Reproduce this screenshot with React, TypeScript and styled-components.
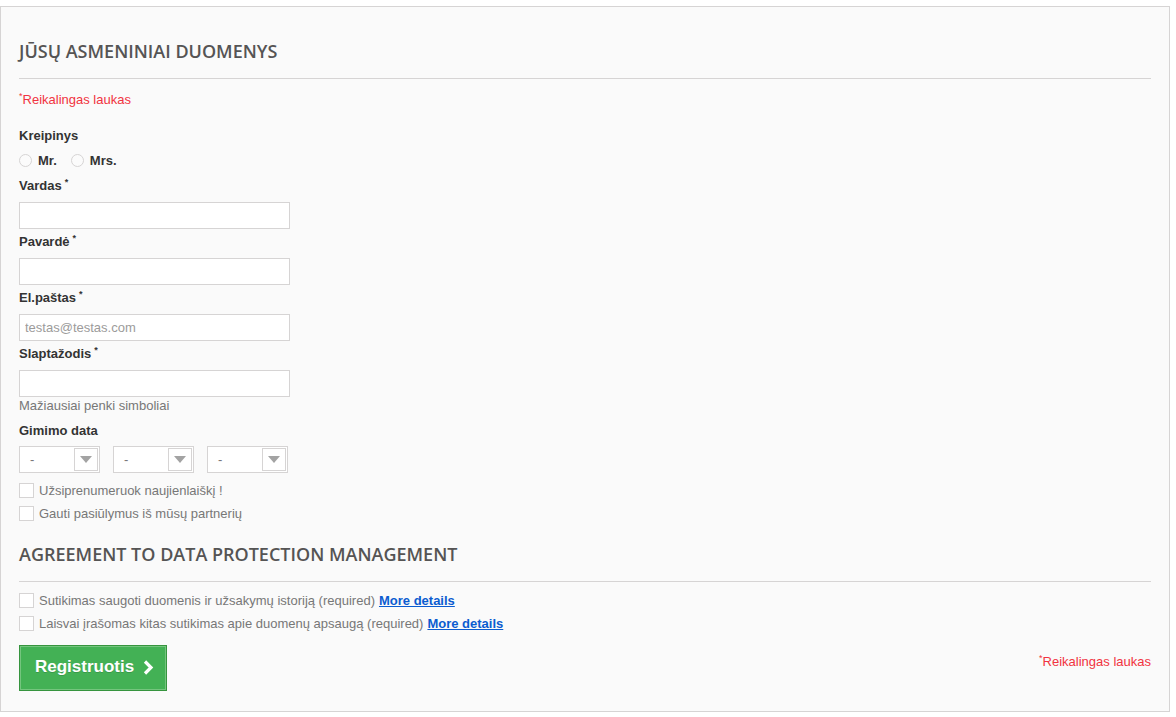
import React from "react";
import styled, { createGlobalStyle } from "styled-components";

const GlobalStyle = createGlobalStyle`
  html, body {
    margin: 0;
    padding: 0;
    background: #ffffff;
  }
  body {
    font-family: "Liberation Sans", Arial, sans-serif;
    font-size: 13px;
    color: #333333;
  }
  * { box-sizing: border-box; }
`;

const Page = styled.div`
  padding-top: 6px;
  width: 1170px;
`;

const Panel = styled.form`
  background: #fafafa;
  border: 1px solid #d6d4d4;
  padding: 32px 18px 20px 18px;
  display: flex;
  flex-direction: column;
`;

const Heading = styled.h3<{ $top?: number }>`
  margin: ${(p) => p.$top ?? 0}px 0 0 0;
  padding: 0 0 15px 0;
  border-bottom: 1px solid #d6d4d4;
  font-family: "Open Sans", sans-serif;
  font-weight: 600;
  font-size: 18px;
  line-height: 24px;
  color: #555454;
  text-transform: uppercase;
`;

const Required = styled.p<{ $top?: number }>`
  margin: ${(p) => p.$top ?? 0}px 0 0 0;
  padding-top: 1px;
  line-height: 18px;
  color: #f13340;
  font-size: 13px;
`;

const Star = styled.sup`
  font-size: 9px;
  line-height: 0;
  vertical-align: 5px;
`;

const Label = styled.label<{ $top?: number }>`
  display: block;
  margin-top: ${(p) => p.$top ?? 0}px;
  padding-top: 1px;
  line-height: 18px;
  font-weight: bold;
  color: #333333;
`;

const LabelStar = styled.sup`
  font-size: 9px;
  line-height: 0;
  vertical-align: 5px;
  margin-left: 3px;
`;

const RadioRow = styled.div`
  display: flex;
  align-items: center;
  gap: 14px;
  margin-top: 6px;
  height: 18px;
`;

const RadioItem = styled.span`
  display: flex;
  align-items: center;
  gap: 6px;
  font-weight: bold;
  color: #333;
`;

const RadioCircle = styled.span`
  width: 13px;
  height: 13px;
  border-radius: 50%;
  border: 1px solid #d6d4d4;
  background: #fbfbfb;
`;

const Field = styled.div`
  display: flex;
  flex-direction: column;
  margin-top: 7px;
  & + & {
    margin-top: 3px;
  }
`;

const TextInput = styled.input`
  margin-top: 7px;
  width: 271px;
  height: 27px;
  border: 1px solid #d6d4d4;
  background: #ffffff;
  padding: 0 5px;
  font-family: "Liberation Sans", Arial, sans-serif;
  font-size: 13px;
  color: #9c9b9b;
  outline: none;
  &::placeholder {
    color: #9c9b9b;
  }
`;

const Help = styled.span`
  line-height: 18px;
  color: #777777;
`;

const SelectRow = styled.div`
  display: flex;
  gap: 13px;
  margin-top: 6px;
`;

const SelectBox = styled.div`
  width: 81px;
  height: 27px;
  border: 1px solid #d6d4d4;
  background: #ffffff;
  display: flex;
  align-items: center;
  justify-content: space-between;
  padding: 1px 1px 1px 10px;
  color: #777;
`;

const SelectArrow = styled.span`
  width: 24px;
  height: 23px;
  border: 1px solid #d6d4d4;
  background: #ffffff;
  display: flex;
  align-items: center;
  justify-content: center;
`;

const CheckList = styled.div<{ $top?: number }>`
  margin-top: ${(p) => p.$top ?? 0}px;
  display: flex;
  flex-direction: column;
`;

const CheckRow = styled.label`
  display: flex;
  align-items: center;
  gap: 5px;
  height: 23px;
  color: #777777;
`;

const CheckBox = styled.span`
  width: 15px;
  height: 15px;
  border: 1px solid #d6d4d4;
  background: #ffffff;
  flex: none;
`;

const MoreLink = styled.a`
  color: #0b5cd0;
  font-weight: bold;
  text-decoration: underline;
  margin-left: 4px;
`;

const Footer = styled.div`
  margin-top: 10px;
  display: flex;
  justify-content: space-between;
  align-items: flex-start;
`;

const SubmitButton = styled.button`
  width: 148px;
  height: 46px;
  background: #43b155;
  border: 1px solid #36943e;
  box-shadow: inset 0 0 0 1px #74c57e;
  color: #ffffff;
  font-family: "Liberation Sans", Arial, sans-serif;
  font-weight: bold;
  font-size: 17px;
  display: flex;
  align-items: center;
  gap: 9px;
  padding: 0 0 2px 15px;
  text-shadow: 0 1px 0 rgba(0, 0, 0, 0.15);
`;

const RightNote = styled(Required)`
  padding-top: 8px;
`;

const Chevron = () => (
  <svg width="11" height="15" viewBox="0 0 11 15">
    <path d="M2 1.5 L8 7.5 L2 13.5" fill="none" stroke="#fff" strokeWidth="3.2" strokeLinejoin="miter" />
  </svg>
);

const Triangle = () => (
  <svg width="12" height="7" viewBox="0 0 12 7">
    <path d="M0 0 H12 L6 7 Z" fill="#a3a3a3" />
  </svg>
);

const fields = [
  { label: "Vardas", placeholder: "" },
  { label: "Pavardė", placeholder: "" },
  { label: "El.paštas", placeholder: "testas@testas.com" },
  { label: "Slaptažodis", placeholder: "" },
];

export default function App() {
  return (
    <Page>
      <GlobalStyle />
      <Panel onSubmit={(e) => e.preventDefault()}>
        <Heading>Jūsų asmeniniai duomenys</Heading>
        <Required $top={11}>
          <Star>*</Star>Reikalingas laukas
        </Required>

        <Label $top={17}>Kreipinys</Label>
        <RadioRow>
          <RadioItem>
            <RadioCircle />
            Mr.
          </RadioItem>
          <RadioItem>
            <RadioCircle />
            Mrs.
          </RadioItem>
        </RadioRow>

        {fields.map((f) => (
          <Field key={f.label}>
            <Label>
              {f.label}
              <LabelStar>*</LabelStar>
            </Label>
            <TextInput placeholder={f.placeholder} readOnly />
          </Field>
        ))}
        <Help>Mažiausiai penki simboliai</Help>

        <Label $top={6}>Gimimo data</Label>
        <SelectRow>
          {[0, 1, 2].map((i) => (
            <SelectBox key={i}>
              -
              <SelectArrow>
                <Triangle />
              </SelectArrow>
            </SelectBox>
          ))}
        </SelectRow>

        <CheckList $top={6}>
          <CheckRow>
            <CheckBox />
            Užsiprenumeruok naujienlaiškį !
          </CheckRow>
          <CheckRow>
            <CheckBox />
            Gauti pasiūlymus iš mūsų partnerių
          </CheckRow>
        </CheckList>

        <Heading $top={17}>Agreement to data protection management</Heading>

        <CheckList $top={7}>
          <CheckRow>
            <CheckBox />
            <span>
              Sutikimas saugoti duomenis ir užsakymų istoriją (required)
              <MoreLink href="#">More details</MoreLink>
            </span>
          </CheckRow>
          <CheckRow>
            <CheckBox />
            <span>
              Laisvai įrašomas kitas sutikimas apie duomenų apsaugą (required)
              <MoreLink href="#">More details</MoreLink>
            </span>
          </CheckRow>
        </CheckList>

        <Footer>
          <SubmitButton type="submit">
            Registruotis
            <Chevron />
          </SubmitButton>
          <RightNote>
            <Star>*</Star>Reikalingas laukas
          </RightNote>
        </Footer>
      </Panel>
    </Page>
  );
}
